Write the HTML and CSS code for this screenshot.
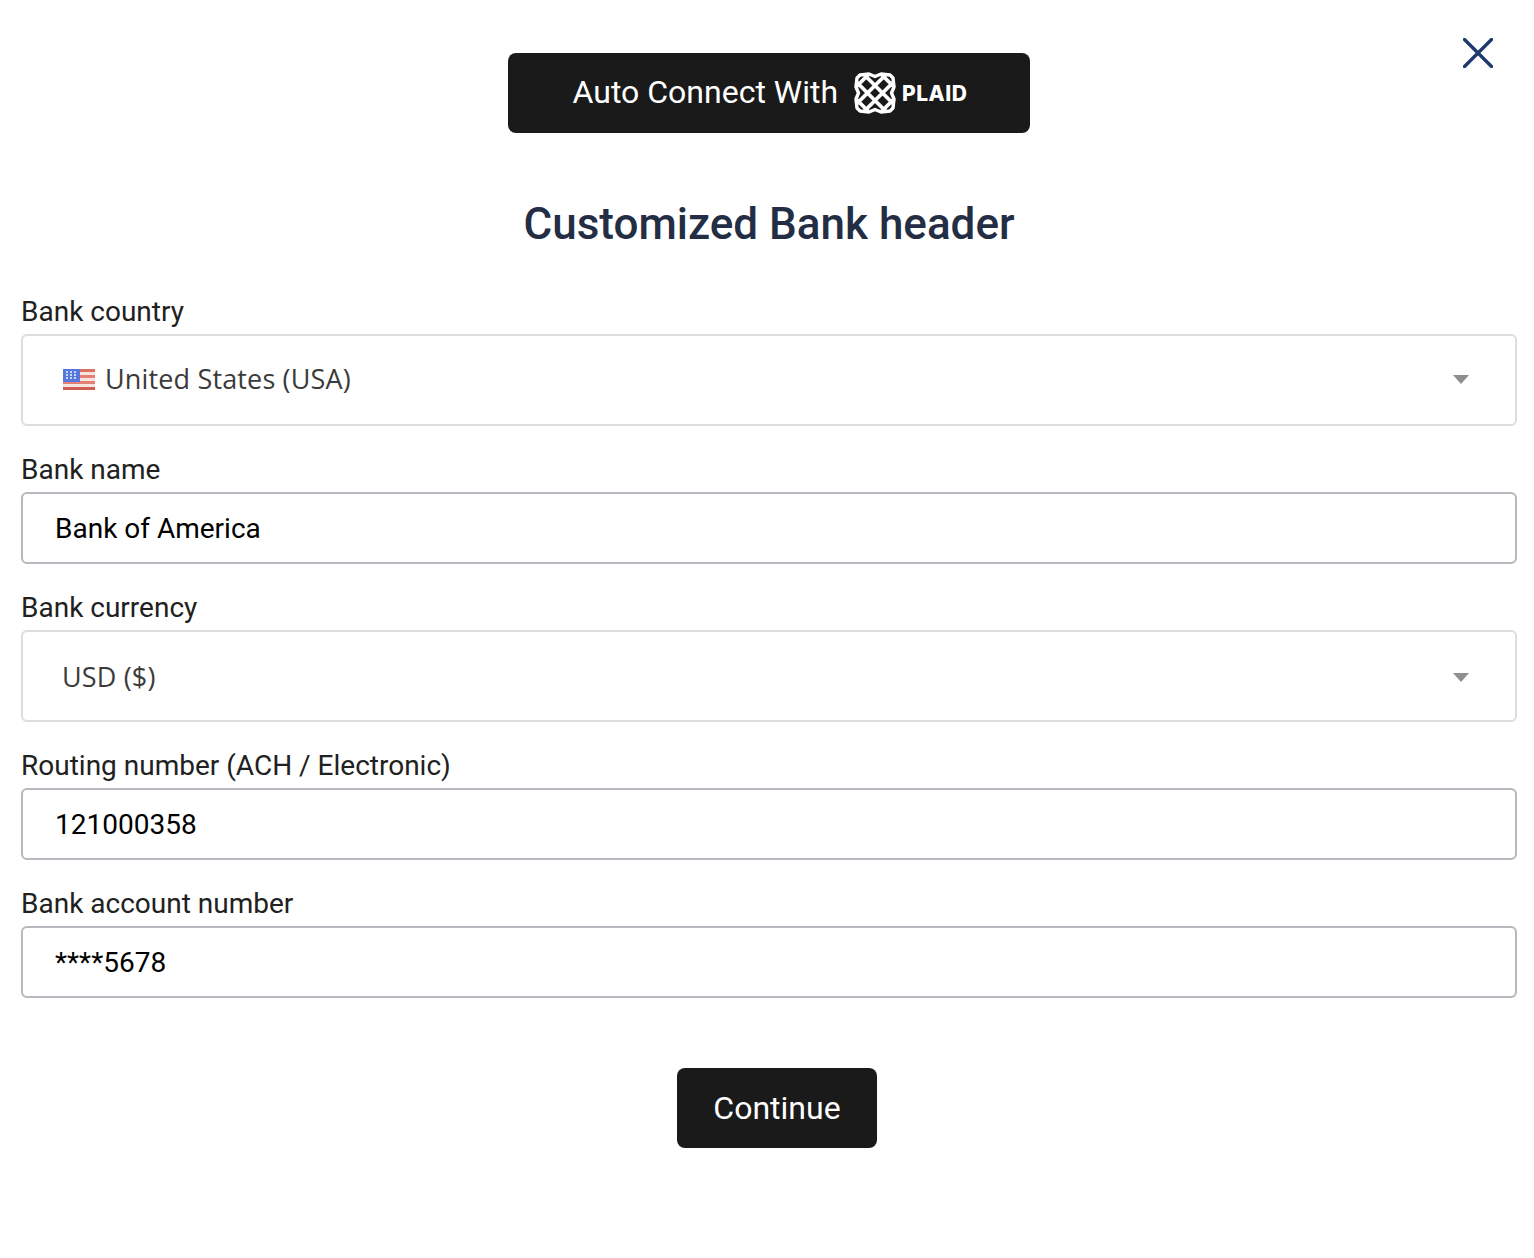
FILE: index.html
```html
<!DOCTYPE html>
<html lang="en">
<head>
  <meta charset="UTF-8">
  <title>Customized Bank header</title>
  <link rel="stylesheet" href="styles.css">
</head>
<body>
  <div class="container">
    <svg class="close-icon" viewBox="0 0 30 30" aria-label="Close">
      <path d="M1.5 1.5 L28.5 28.5 M28.5 1.5 L1.5 28.5"/>
    </svg>

    <div class="plaid-row">
      <button class="dark-button plaid-button">
        <span class="plaid-text">Auto Connect With</span>
        <svg class="plaid-mark" viewBox="0 0 42 42">
          <path class="mark-outline" d="M15 2 L21 4.500 L27 2 L36 3 L39 6 L40 15 L37.500 21 L40 27 L39 36 L36 39 L27 40 L21 37.500 L15 40 L6 39 L3 36 L2 27 L4.500 21 L2 15 L3 6 L6 3 Z"/>
          <path class="mark-lattice" d="M10.500 3 L39 31.500 M3 10.500 L31.500 39 M27 2 L40 15 M2 27 L15 40 M31.500 3 L3 31.500 M39 10.500 L10.500 39 M15 2 L2 15 M40 27 L27 40"/>
        </svg>
        <span class="plaid-word">PLAID</span>
      </button>
    </div>

    <h1>Customized Bank header</h1>

    <div class="field">
      <label>Bank country</label>
      <div class="select-box country-box">
        <svg class="flag" viewBox="0 0 32 21">
          <rect width="32" height="21" fill="#f7e4e0"/>
          <rect y="0" width="32" height="3" fill="#dd6f63"/>
          <rect y="6" width="32" height="3" fill="#e47f74"/>
          <rect y="12" width="32" height="3" fill="#e47f74"/>
          <rect y="18" width="32" height="3" fill="#cf5f55"/>
          <rect width="17" height="13" fill="#5478dc"/>
          <g fill="#c9d6f7">
            <rect x="3" y="2" width="2" height="2"/>
            <rect x="7" y="2" width="2" height="2"/>
            <rect x="11" y="2" width="2" height="2"/>
            <rect x="3" y="5" width="2" height="2"/>
            <rect x="7" y="5" width="2" height="2"/>
            <rect x="11" y="5" width="2" height="2"/>
            <rect x="3" y="8" width="2" height="2"/>
            <rect x="7" y="8" width="2" height="2"/>
            <rect x="11" y="8" width="2" height="2"/>
          </g>
        </svg>
        <span class="select-text">United States (USA)</span>
        <span class="caret"></span>
      </div>
    </div>

    <div class="field">
      <label>Bank name</label>
      <div class="text-box">Bank of America</div>
    </div>

    <div class="field">
      <label>Bank currency</label>
      <div class="select-box currency-box">
        <span class="select-text">USD ($)</span>
        <span class="caret"></span>
      </div>
    </div>

    <div class="field">
      <label>Routing number (ACH / Electronic)</label>
      <div class="text-box">121000358</div>
    </div>

    <div class="field">
      <label>Bank account number</label>
      <div class="text-box">****5678</div>
    </div>

    <div class="actions">
      <button class="dark-button continue-button">Continue</button>
    </div>
  </div>
</body>
</html>
```

FILE: styles.css
```css
body {
  margin: 0;
  background: #fff;
  font-family: Roboto, 'Liberation Sans', sans-serif;
  color: #1a1a1a;
}
.container {
  position: relative;
  box-sizing: border-box;
  height: 1258px;
  padding: 53px 17px 0 21px;
}
.close-icon {
  position: absolute;
  top: 38px;
  right: 41px;
  width: 30px;
  height: 30px;
}
.close-icon path {
  fill: none;
  stroke: #1f3a6e;
  stroke-width: 3.4;
  stroke-linecap: round;
}
.plaid-row {
  display: flex;
  justify-content: center;
}
.dark-button {
  display: flex;
  align-items: center;
  justify-content: center;
  height: 80px;
  border: none;
  border-radius: 8px;
  background: #1a1a1a;
  color: #fff;
  font-family: Roboto, sans-serif;
  font-size: 32px;
  padding: 0;
}
.plaid-button {
  width: 522px;
  padding-left: 2px;
}
.plaid-text {
  padding-bottom: 2px;
}
.plaid-mark {
  width: 42px;
  height: 42px;
  margin-left: 16px;
}
.mark-outline {
  fill: none;
  stroke: #fff;
  stroke-width: 3.4;
  stroke-linejoin: round;
}
.mark-lattice {
  fill: none;
  stroke: #fff;
  stroke-width: 3.8;
}
.plaid-word {
  margin-left: 6px;
  font-family: Inter, sans-serif;
  font-size: 21px;
  font-weight: 800;
  letter-spacing: 0.5px;
}
h1 {
  margin: 65px 0 45px;
  font-size: 44px;
  line-height: 52px;
  font-weight: 500;
  color: #232e45;
  text-align: center;
}
.field {
  margin-top: 27px;
}
label {
  display: block;
  height: 32px;
  margin-bottom: 7px;
  font-size: 28px;
  line-height: 34px;
  color: #212121;
}
.select-box {
  display: flex;
  align-items: center;
  box-sizing: border-box;
  height: 92px;
  padding: 0 46px 0 40px;
  border: 2px solid #dcdcdc;
  border-radius: 6px;
}
.country-box {
  padding-bottom: 2px;
}
.currency-box {
  padding-top: 2px;
}
.flag {
  width: 32px;
  height: 21px;
  margin-right: 11px;
  filter: blur(0.6px);
}
.select-text {
  flex: 1;
  margin: -2px 0 0 -1px;
  font-family: 'Open Sans', sans-serif;
  font-size: 27px;
  letter-spacing: 0.15px;
  color: #3b3b3b;
}
.caret {
  width: 0;
  height: 0;
  border-left: 8px solid transparent;
  border-right: 8px solid transparent;
  border-top: 9px solid #8f8f8f;
}
.text-box {
  box-sizing: border-box;
  height: 72px;
  padding: 0 32px;
  border: 2px solid #b5b8bc;
  border-radius: 6px;
  font-size: 28px;
  line-height: 70px;
  color: #000;
}
.actions {
  display: flex;
  justify-content: center;
  margin-top: 70px;
  padding-left: 16px;
}
.continue-button {
  width: 200px;
}
```
